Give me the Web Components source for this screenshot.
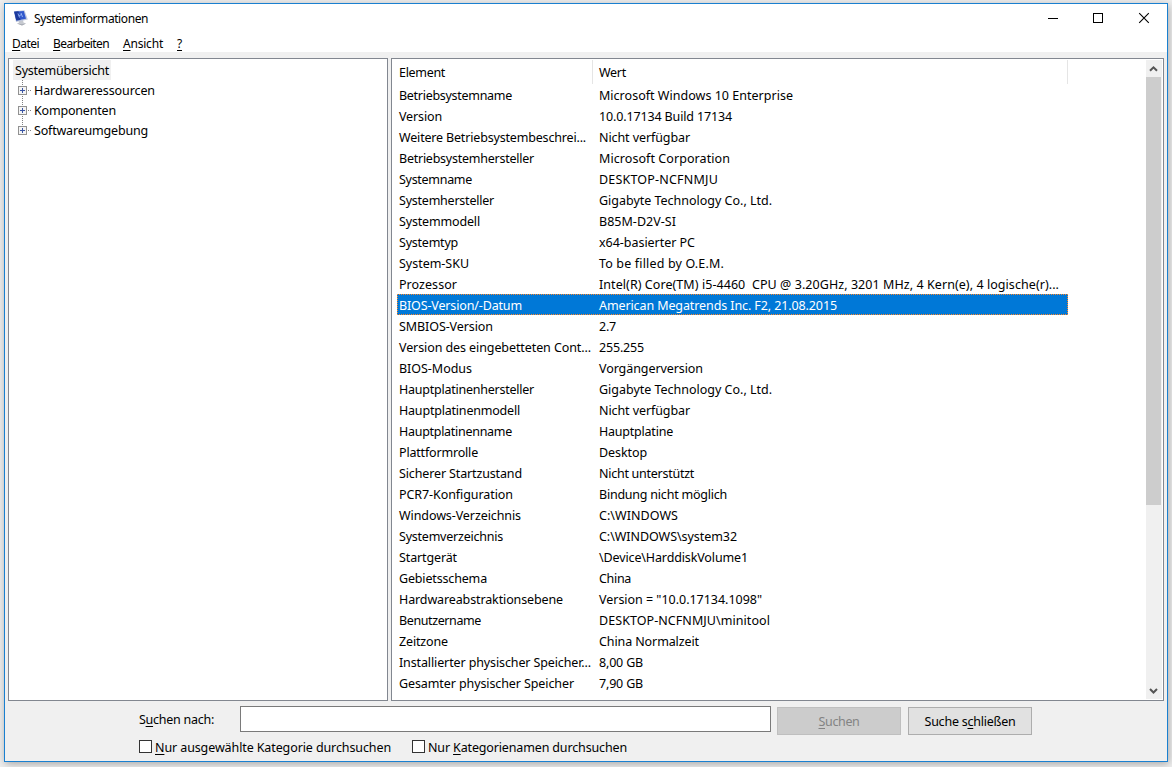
<!DOCTYPE html>
<html lang="de">
<head>
<meta charset="utf-8">
<title>Systeminformationen</title>
<style>
html, body {
  margin: 0;
  height: 100%;
  overflow: hidden;
}
body {
  box-sizing: border-box;
  padding: 3px 4px 5px;
  background: #efefef;
  color: #000;
  font: 12.5px/20px "Noto Sans", "Open Sans", sans-serif;
}
</style>
</head>
<body>
<system-window></system-window>

<script>
// Name, Wert und die Textbreiten der beiden Spalten
const daten = [
  ['Betriebsystemname', 'Microsoft Windows 10 Enterprise', 113, 194],
  ['Version', '10.0.17134 Build 17134', 43, 133],
  ['Weitere Betriebsystembeschrei...', 'Nicht verfügbar', 187, 91],
  ['Betriebsystemhersteller', 'Microsoft Corporation', 135, 131],
  ['Systemname', 'DESKTOP-NCFNMJU', 73, 119],
  ['Systemhersteller', 'Gigabyte Technology Co., Ltd.', 95, 173],
  ['Systemmodell', 'B85M-D2V-SI', 81, 77],
  ['Systemtyp', 'x64-basierter PC', 59, 96],
  ['System-SKU', 'To be filled by O.E.M.', 70, 125],
  ['Prozessor', 'Intel(R) Core(TM) i5-4460  CPU @ 3.20GHz, 3201 MHz, 4 Kern(e), 4 logische(r)...', 58, 460],
  ['BIOS-Version/-Datum', 'American Megatrends Inc. F2, 21.08.2015', 123, 238],
  ['SMBIOS-Version', '2.7', 94, 17],
  ['Version des eingebetteten Cont...', '255.255', 192, 45],
  ['BIOS-Modus', 'Vorgängerversion', 73, 104],
  ['Hauptplatinenhersteller', 'Gigabyte Technology Co., Ltd.', 135, 173],
  ['Hauptplatinenmodell', 'Nicht verfügbar', 121, 91],
  ['Hauptplatinenname', 'Hauptplatine', 113, 74],
  ['Plattformrolle', 'Desktop', 79, 48],
  ['Sicherer Startzustand', 'Nicht unterstützt', 123, 95],
  ['PCR7-Konfiguration', 'Bindung nicht möglich', 114, 128],
  ['Windows-Verzeichnis', 'C:\\WINDOWS', 122, 79],
  ['Systemverzeichnis', 'C:\\WINDOWS\\system32', 104, 138],
  ['Startgerät', '\\Device\\HarddiskVolume1', 58, 149],
  ['Gebietsschema', 'China', 88, 32],
  ['Hardwareabstraktionsebene', 'Version = "10.0.17134.1098"', 164, 163],
  ['Benutzername', 'DESKTOP-NCFNMJU\\minitool', 82, 171],
  ['Zeitzone', 'China Normalzeit', 49, 100],
  ['Installierter physischer Speicher...', '8,00 GB', 192, 44],
  ['Gesamter physischer Speicher', '7,90 GB', 175, 44]
];

function define(name, html) {
  customElements.define(name, class extends HTMLElement {
    constructor() {
      super();
      this.attachShadow({ mode: 'open' }).innerHTML = html;
    }
  });
}

// Text, dessen Laufweite auf die Breite in "w" angepasst wird
class FitText extends HTMLElement {
  constructor() {
    super();
    this.attachShadow({ mode: 'open' }).innerHTML = `
<style>
:host { display: block; flex: none; width: max-content; }
span { white-space: pre; }
::slotted(u) { text-underline-offset: 2px; text-decoration-thickness: 1px; text-decoration-skip-ink: none; }
</style>
<span><slot></slot></span>`;
  }
  connectedCallback() {
    this.fit();
  }
  fit() {
    const w = Number(this.getAttribute('w'));
    const n = this.textContent.length;
    if (!w || !n) return;
    this.style.letterSpacing = '0';
    const natural = this.getBoundingClientRect().width;
    if (!natural) return;
    this.style.letterSpacing = `${(w - natural) / n}px`;
  }
}

// Titelleiste
define('title-bar', `
<style>
:host {
  display: flex;
  height: 30px;
  background: #fff;
  font-size: 12px;
}
.icon { margin: 6px 6px 0 8px; }
span { flex: 1; line-height: 30px; }
.knob { width: 46px; height: 30px; }
</style>
<svg class="icon" width="15" height="16" viewBox="0 0 15 16">
  <path d="M5.500 10.500L10 10L10.500 12.500L13 13.500L9 15.500L4 13.500L6 12.500Z" fill="#c6c9cf"/>
  <path d="M4 13.500L9 15.500L13 13.500L9 14.200Z" fill="#a6aab3"/>
  <path d="M.8 1.200L11.500 .3L14.800 9.500L3 11.900Z" fill="#bcc5dc"/>
  <path d="M1.200 1.700L10.800 .9L13 8.800L3.300 10.600Z" fill="#3158cc"/>
  <path d="M1.200 1.700L5.500 1.300L7.500 9.900L3.300 10.600Z" fill="#1c3a9c"/>
  <path d="M5 3.500L6.500 7.500M8 3L9.500 7M6 6L9 4" stroke="#9db8f5" stroke-width=".9"/>
</svg>
<span><slot></slot></span>
<svg class="knob" viewBox="0 0 46 30" shape-rendering="crispEdges"><path d="M19 14.500h10" stroke="#000"/></svg>
<svg class="knob" viewBox="0 0 46 30" shape-rendering="crispEdges"><path d="M18.500 9.500h9v9h-9z" fill="none" stroke="#000"/></svg>
<svg class="knob" viewBox="0 0 46 30"><path d="M18.200 9.200l9.600 9.600M27.800 9.200l-9.600 9.600" stroke="#000" stroke-width="1.100"/></svg>
`);

define('menu-bar', `
<style>
:host {
  display: flex;
  gap: 14px;
  height: 18px;
  padding-left: 7px;
  background: #fff;
  font-size: 12px;
  line-height: 20px;
}
</style>
<slot></slot>
`);

// Strukturansicht links
define('tree-view', `
<style>
:host {
  display: flex;
  flex-direction: column;
  box-sizing: border-box;
  width: 380px;
  padding: 1px 4px;
  border: 1px solid #828790;
  background: #fff;
}
.root {
  align-self: flex-start;
  width: 96px;
  height: 20px;
  padding-left: 2px;
  background: #f0f0f0;
  line-height: 22px;
}
</style>
<div class="root"><fit-text w="94">Systemübersicht</fit-text></div>
<slot></slot>
`);

define('tree-node', `
<style>
:host { display: flex; height: 20px; line-height: 22px; }
svg { flex: none; margin-left: 4px; width: 17px; height: 20px; }
:host([last]) .below { display: none; }
</style>
<svg viewBox="0 0 17 20" shape-rendering="crispEdges">
  <path d="M5.500 0v6M11 10.500h3" stroke="#808080" stroke-dasharray="1 1"/>
  <path class="below" d="M5.500 16v4" stroke="#808080" stroke-dasharray="1 1"/>
  <rect x="1.500" y="6.500" width="8" height="8" fill="#f4f4f4" stroke="#919191"/>
  <path d="M3 10.500h5M5.500 8v5" stroke="#3a55a4"/>
</svg>
<slot></slot>
`);

// Bildlaufleiste
define('scroll-bar', `
<style>
:host {
  display: flex;
  flex-direction: column;
  width: 16px;
  background: #f0f0f0;
}
svg { flex: none; width: 16px; height: 17px; }
.thumb { width: 15px; height: 428px; margin-bottom: auto; background: #cdcdcd; }
</style>
<svg viewBox="0 0 16 17"><path d="M4 10.800L7.500 7.300L11 10.800" fill="none" stroke="#555" stroke-width="2"/></svg>
<div class="thumb"></div>
<svg viewBox="0 0 16 17"><path d="M4 7L7.500 10.500L11 7" fill="none" stroke="#555" stroke-width="2"/></svg>
`);

class InfoRow extends HTMLElement {
  constructor() {
    super();
    this.attachShadow({ mode: 'open' }).innerHTML = `
<style>
:host {
  display: flex;
  box-sizing: border-box;
  width: 671px;
  height: 21px;
  line-height: 23px;
}
:host([selected]) {
  background:
    repeating-linear-gradient(90deg, #ff8728 0 1px, #0078d7 1px 2px) 0 0 / 100% 1px no-repeat,
    repeating-linear-gradient(90deg, #ff8728 0 1px, #0078d7 1px 2px) 0 100% / 100% 1px no-repeat,
    repeating-linear-gradient(#ff8728 0 1px, #0078d7 1px 2px) 0 0 / 1px 100% no-repeat,
    repeating-linear-gradient(#ff8728 0 1px, #0078d7 1px 2px) 100% 0 / 1px 100% no-repeat,
    #0078d7;
  color: #fff;
}
.name { flex: none; width: 200px; padding-left: 2px; }
</style>
<div class="name"><fit-text></fit-text></div>
<div><fit-text></fit-text></div>`;
  }
  set data([name, value, nameWidth, valueWidth]) {
    const [a, b] = this.shadowRoot.querySelectorAll('fit-text');
    a.textContent = name;
    a.setAttribute('w', nameWidth);
    b.textContent = value;
    b.setAttribute('w', valueWidth);
  }
}
customElements.define('info-row', InfoRow);

class InfoList extends HTMLElement {
  constructor() {
    super();
    this.attachShadow({ mode: 'open' }).innerHTML = `
<style>
:host {
  display: flex;
  box-sizing: border-box;
  flex: 1;
  padding: 1px 1px 1px 5px;
  border: 1px solid #828790;
  background: #fff;
}
.list { flex: 1; }
.head { display: flex; height: 24px; line-height: 25px; }
.head div {
  box-sizing: border-box;
  border-right: 1px solid #e5e5e5;
}
.head div:first-child { width: 196px; padding-left: 2px; }
.head div:last-child { width: 475px; padding-left: 6px; }
</style>
<div class="list">
  <div class="head">
    <div><fit-text w="46">Element</fit-text></div>
    <div><fit-text w="27">Wert</fit-text></div>
  </div>
</div>
<scroll-bar></scroll-bar>`;
    const list = this.shadowRoot.querySelector('.list');
    daten.forEach((d, i) => {
      const row = document.createElement('info-row');
      row.data = d;
      if (i === 10) row.setAttribute('selected', '');
      list.appendChild(row);
    });
  }
}
customElements.define('info-list', InfoList);

define('push-button', `
<style>
:host {
  box-sizing: border-box;
  display: flex;
  justify-content: center;
  width: 124px;
  height: 28px;
  border: 1px solid #adadad;
  background: #e1e1e1;
  line-height: 27px;
}
:host([disabled]) {
  border-color: #bfbfbf;
  background: #ccc;
  color: #838383;
}
</style>
<slot></slot>
`);

define('check-box', `
<style>
:host { display: flex; gap: 3px; height: 20px; line-height: 22px; }
i {
  box-sizing: border-box;
  width: 13px;
  height: 13px;
  margin-top: 3px;
  border: 1px solid #333;
  background: #fff;
}
</style>
<i></i><slot></slot>
`);

// Suchbereich unten
define('search-panel', `
<style>
:host { display: block; box-sizing: border-box; height: 60px; padding: 5px 0 0 134px; }
.line { display: flex; }
label { width: 101px; line-height: 28px; }
.input {
  box-sizing: border-box;
  width: 531px;
  height: 26px;
  border: 1px solid #7a7a7a;
  background: #fff;
}
push-button { margin: 1px 0 0 6px; }
push-button + push-button { margin-left: 7px; }
.checks { display: flex; margin-top: 2px; }
check-box { width: 273px; }
</style>
<div class="line">
  <label><fit-text w="75">S<u>u</u>chen nach:</fit-text></label>
  <div class="input"></div>
  <push-button disabled><fit-text w="41"><u>S</u>uchen</fit-text></push-button>
  <push-button><fit-text w="91">Suche s<u>c</u>hließen</fit-text></push-button>
</div>
<div class="checks">
  <check-box><fit-text w="236"><u>N</u>ur ausgewählte Kategorie durchsuchen</fit-text></check-box>
  <check-box><fit-text w="199">Nur <u>K</u>ategorienamen durchsuchen</fit-text></check-box>
</div>
`);

define('system-window', `
<style>
:host {
  display: flex;
  flex-direction: column;
  box-sizing: border-box;
  height: 759px;
  border: 1px solid #1a80d0;
  background: #f0f0f0;
  box-shadow: 1px 2px 8px 0 rgba(0, 0, 0, .3);
}
.panes { display: flex; gap: 3px; height: 643px; padding: 6px 3px 0; }
</style>
<title-bar><fit-text w="114">Systeminformationen</fit-text></title-bar>
<menu-bar>
  <fit-text w="27"><u>D</u>atei</fit-text>
  <fit-text w="56"><u>B</u>earbeiten</fit-text>
  <fit-text w="40"><u>A</u>nsicht</fit-text>
  <fit-text w="5"><u>?</u></fit-text>
</menu-bar>
<div class="panes">
  <tree-view>
    <tree-node><fit-text w="121">Hardwareressourcen</fit-text></tree-node>
    <tree-node><fit-text w="82">Komponenten</fit-text></tree-node>
    <tree-node last><fit-text w="114">Softwareumgebung</fit-text></tree-node>
  </tree-view>
  <info-list></info-list>
</div>
<search-panel></search-panel>
`);

// Erst hier, damit alle umgebenden Stile beim Messen schon gelten
customElements.define('fit-text', FitText);
</script>
</body>
</html>
